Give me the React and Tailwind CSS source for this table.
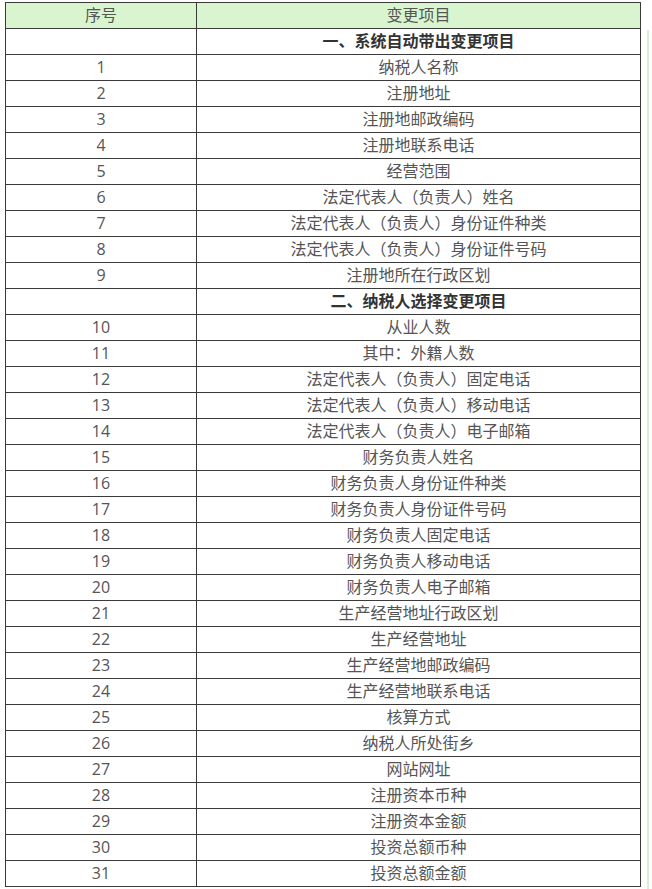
import React from "react";

const sec1 = [
  "纳税人名称",
  "注册地址",
  "注册地邮政编码",
  "注册地联系电话",
  "经营范围",
  "法定代表人（负责人）姓名",
  "法定代表人（负责人）身份证件种类",
  "法定代表人（负责人）身份证件号码",
  "注册地所在行政区划",
];
const sec2 = [
  "从业人数",
  "其中：外籍人数",
  "法定代表人（负责人）固定电话",
  "法定代表人（负责人）移动电话",
  "法定代表人（负责人）电子邮箱",
  "财务负责人姓名",
  "财务负责人身份证件种类",
  "财务负责人身份证件号码",
  "财务负责人固定电话",
  "财务负责人移动电话",
  "财务负责人电子邮箱",
  "生产经营地址行政区划",
  "生产经营地址",
  "生产经营地邮政编码",
  "生产经营地联系电话",
  "核算方式",
  "纳税人所处街乡",
  "网站网址",
  "注册资本币种",
  "注册资本金额",
  "投资总额币种",
  "投资总额金额",
];

const cell = "border border-[#3a3a3a] text-center align-middle h-[26px] p-0 leading-[25px]";

function Row({ n, text }) {
  return (
    <tr>
      <td className={cell}>{n}</td>
      <td className={cell}>{text}</td>
    </tr>
  );
}

function Section({ text }) {
  return (
    <tr>
      <td className={cell}></td>
      <td className={cell + " font-bold text-[#333]"}>{text}</td>
    </tr>
  );
}

export default function App() {
  return (
    <div
      className="flex bg-white min-h-[889px] text-[#555] text-[16px]"
      style={{ fontFamily: '"Open Sans", "Noto Sans CJK SC", sans-serif' }}
    >
      <table className="ml-[5px] mt-[2px] border-collapse w-[636px] table-fixed self-start">
        <colgroup>
          <col className="w-[191px]" />
          <col />
        </colgroup>
        <thead>
          <tr className="bg-[#d9f5cf]">
            <th className={cell + " font-normal"}>序号</th>
            <th className={cell + " font-normal"}>变更项目</th>
          </tr>
        </thead>
        <tbody>
          <Section text="一、系统自动带出变更项目" />
          {sec1.map((t, i) => (
            <Row key={t} n={i + 1} text={t} />
          ))}
          <Section text="二、纳税人选择变更项目" />
          {sec2.map((t, i) => (
            <Row key={t} n={i + 10} text={t} />
          ))}
        </tbody>
      </table>
      <div className="ml-[6px] mt-[30px] w-[2px] bg-[#dcefd3] self-stretch"></div>
    </div>
  );
}
